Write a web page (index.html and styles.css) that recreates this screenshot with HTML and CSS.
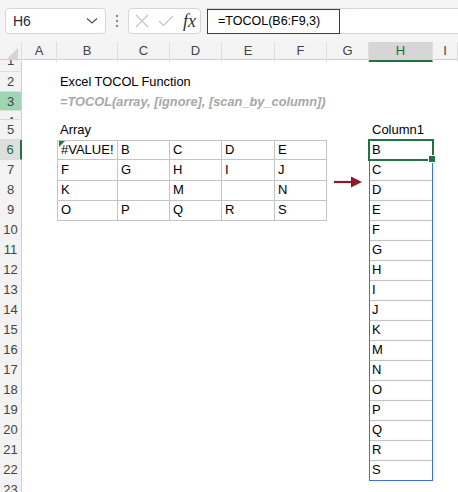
FILE: index.html
```html
<!DOCTYPE html>
<html lang="en">
<head>
    <meta charset="UTF-8">
    <title>Excel TOCOL Function</title>
    <link rel="stylesheet" href="styles.css">
</head>
<body>
    <!-- formula bar -->
    <div class="topbar">
        <div class="namebox">
            <span>H6</span>
            <svg width="12" height="8" viewBox="0 0 12 8"><path d="M1 1.5 L6 6 L11 1.5" fill="none" stroke="#555" stroke-width="1.3"/></svg>
        </div>
        <div class="grip">
            <svg width="4" height="14" viewBox="0 0 4 14"><circle cx="2" cy="2" r="1.2" fill="#8a8a8a"/><circle cx="2" cy="7" r="1.2" fill="#8a8a8a"/><circle cx="2" cy="12" r="1.2" fill="#8a8a8a"/></svg>
        </div>
        <div class="fxbtns">
            <svg width="14" height="14" viewBox="0 0 14 14"><path d="M1 1 L13 13 M13 1 L1 13" stroke="#c4c4c4" stroke-width="1.2"/></svg>
            <svg width="16" height="12" viewBox="0 0 16 12"><path d="M1 6 L5.5 10.5 L15 1" fill="none" stroke="#c4c4c4" stroke-width="1.2"/></svg>
            <span class="fx">fx</span>
        </div>
        <div class="formula">
            <div class="formula-text">=TOCOL(B6:F9,3)</div>
        </div>
    </div>

    <div class="sheet">
        <div class="row colhdr">
            <div class="corner"></div>
            <div>A</div><div>B</div><div>C</div><div>D</div><div>E</div><div>F</div><div>G</div>
            <div class="active">H</div><div>I</div>
        </div>

        <div class="row r1"><div class="rh">1</div></div>
        <div class="row"><div class="rh">2</div><div></div><div class="cell title">Excel TOCOL Function</div></div>
        <div class="row r3"><div class="rh hl-green">3</div><div></div><div class="cell syntax">=TOCOL(array, [ignore], [scan_by_column])</div></div>
        <div class="row r4"><div class="rh">4</div></div>
        <div class="row"><div class="rh">5</div><div></div><div class="cell">Array</div><div></div><div></div><div></div><div></div><div></div><div class="cell">Column1</div></div>

        <div class="row">
            <div class="rh sel-row">6</div><div></div>
            <div class="cell tc first top err">#VALUE!</div>
            <div class="cell tc top">B</div>
            <div class="cell tc top">C</div>
            <div class="cell tc top">D</div>
            <div class="cell tc top">E</div>
            <div></div>
            <div class="cell selected">B</div>
        </div>
        <div class="row">
            <div class="rh">7</div><div></div>
            <div class="cell tc first">F</div>
            <div class="cell tc">G</div>
            <div class="cell tc">H</div>
            <div class="cell tc">I</div>
            <div class="cell tc">J</div>
            <div class="arrow-cell">
                <svg class="arrow" width="28" height="12" viewBox="0 0 28 12"><path d="M0 6 H19" stroke="#8b1a2b" stroke-width="2.2"/><path d="M17 0.5 L28 6 L17 11.5 Z" fill="#8b1a2b"/></svg>
            </div>
            <div class="cell spill">C</div>
        </div>
        <div class="row">
            <div class="rh">8</div><div></div>
            <div class="cell tc first">K</div>
            <div class="cell tc"></div>
            <div class="cell tc">M</div>
            <div class="cell tc"></div>
            <div class="cell tc">N</div>
            <div></div>
            <div class="cell spill">D</div>
        </div>
        <div class="row">
            <div class="rh">9</div><div></div>
            <div class="cell tc first">O</div>
            <div class="cell tc">P</div>
            <div class="cell tc">Q</div>
            <div class="cell tc">R</div>
            <div class="cell tc">S</div>
            <div></div>
            <div class="cell spill">E</div>
        </div>
        <div class="row"><div class="rh">10</div><div></div><div></div><div></div><div></div><div></div><div></div><div></div><div class="cell spill">F</div></div>
        <div class="row"><div class="rh">11</div><div></div><div></div><div></div><div></div><div></div><div></div><div></div><div class="cell spill">G</div></div>
        <div class="row"><div class="rh">12</div><div></div><div></div><div></div><div></div><div></div><div></div><div></div><div class="cell spill">H</div></div>
        <div class="row"><div class="rh">13</div><div></div><div></div><div></div><div></div><div></div><div></div><div></div><div class="cell spill">I</div></div>
        <div class="row"><div class="rh">14</div><div></div><div></div><div></div><div></div><div></div><div></div><div></div><div class="cell spill">J</div></div>
        <div class="row"><div class="rh">15</div><div></div><div></div><div></div><div></div><div></div><div></div><div></div><div class="cell spill">K</div></div>
        <div class="row"><div class="rh">16</div><div></div><div></div><div></div><div></div><div></div><div></div><div></div><div class="cell spill">M</div></div>
        <div class="row"><div class="rh">17</div><div></div><div></div><div></div><div></div><div></div><div></div><div></div><div class="cell spill">N</div></div>
        <div class="row"><div class="rh">18</div><div></div><div></div><div></div><div></div><div></div><div></div><div></div><div class="cell spill">O</div></div>
        <div class="row"><div class="rh">19</div><div></div><div></div><div></div><div></div><div></div><div></div><div></div><div class="cell spill">P</div></div>
        <div class="row"><div class="rh">20</div><div></div><div></div><div></div><div></div><div></div><div></div><div></div><div class="cell spill">Q</div></div>
        <div class="row"><div class="rh">21</div><div></div><div></div><div></div><div></div><div></div><div></div><div></div><div class="cell spill">R</div></div>
        <div class="row"><div class="rh">22</div><div></div><div></div><div></div><div></div><div></div><div></div><div></div><div class="cell spill last">S</div></div>
        <div class="row"><div class="rh">23</div></div>
    </div>
</body>
</html>
```

FILE: styles.css
```css
* {
    margin: 0;
    padding: 0;
    box-sizing: border-box;
}

body {
    width: 458px;
    height: 492px;
    overflow: hidden;
    background: #ffffff;
    font-family: 'Liberation Sans', Arial, sans-serif;
    font-size: 13px;
    color: #000;
}

/* ---------- formula bar ---------- */
.topbar {
    height: 42px;
    background: #f5f5f5;
    display: flex;
    align-items: flex-start;
    padding-top: 8px;
    padding-left: 5px;
}

.namebox {
    width: 101px;
    height: 26px;
    background: #fff;
    border: 1px solid #d6d6d6;
    border-radius: 4px;
    display: flex;
    align-items: center;
    justify-content: space-between;
    padding: 0 7px 0 7px;
    font-size: 14px;
    color: #1f2a44;
}

.grip {
    width: 22px;
    height: 26px;
    display: flex;
    align-items: center;
    justify-content: center;
}

.fxbtns {
    width: 73px;
    height: 26px;
    background: #fff;
    border: 1px solid #d6d6d6;
    border-radius: 4px;
    display: flex;
    align-items: center;
    gap: 9px;
    padding-left: 6px;
}

.fx {
    font-family: 'Liberation Serif', 'DejaVu Serif', serif;
    font-style: italic;
    font-size: 18px;
    color: #333;
    margin-left: 0;
}

.formula {
    flex: 1;
    height: 26px;
    margin-left: 6px;
    background: #fff;
    border-top: 1px solid #d6d6d6;
    border-bottom: 1px solid #d6d6d6;
    display: flex;
}

.formula-text {
    width: 133px;
    height: 25px;
    border: 1.5px solid #8b1a2b;
    padding-left: 10px;
    line-height: 22px;
    font-size: 12.5px;
    color: #000;
}

/* ---------- sheet grid ---------- */
.row {
    display: grid;
    grid-template-columns: 22px 35px 61px 52px 52px 53px 52px 42px 64px 1fr;
    height: 20px;
    line-height: 20px;
}

.r1 { height: 12px; }
.r3 { height: 19px; line-height: 19px; }
.r4 { height: 9px; }

.colhdr {
    height: 18px;
    line-height: 18px;
    background: #f3f3f3;
    border-bottom: 1px solid #cfcfcf;
    color: #444;
    text-align: center;
    font-size: 13px;
}

.colhdr > div {
    border-right: 1px solid #dedede;
}

.colhdr .active {
    background: #d6d6d6;
    color: #1d6b3f;
    border-bottom: 2px solid #217346;
}

.corner {
    position: relative;
}

.corner::after {
    content: '';
    position: absolute;
    right: 3px;
    bottom: 3px;
    border-left: 11px solid transparent;
    border-bottom: 11px solid #d4d4d4;
}

.rh {
    background: #f3f3f3;
    border-right: 1px solid #cfcfcf;
    border-bottom: 1px solid #dcdcdc;
    text-align: center;
    color: #444;
    font-size: 13px;
    overflow: hidden;
}

.r1 .rh { line-height: 2px; }
.r4 .rh { line-height: 22px; }

.rh.hl-green {
    background: #9fd5b5;
}

.rh.sel-row {
    background: #dedede;
    color: #1d6b3f;
    border-right: 2px solid #217346;
}

.cell {
    padding-left: 3px;
    white-space: nowrap;
}

.title {
    font-size: 12.8px;
}

.syntax {
    font-weight: bold;
    font-style: italic;
    color: #a8a8a8;
    font-size: 12.8px;
}

/* source table B6:F9 */
.tc {
    border-right: 1px solid #c4c4c4;
    border-bottom: 1px solid #c4c4c4;
}

.tc.first { border-left: 1px solid #c4c4c4; }
.tc.top { border-top: 1px solid #c4c4c4; line-height: 18px; }

.err {
    position: relative;
}

.err::before {
    content: '';
    position: absolute;
    left: 1px;
    top: 0;
    border-top: 6px solid #1f7a3c;
    border-right: 6px solid transparent;
}

/* result column */
.selected {
    position: relative;
}

.selected::after {
    content: '';
    position: absolute;
    inset: -1px -1px -1px -1px;
    border: 2px solid #217346;
}

.selected::before {
    content: '';
    position: absolute;
    right: -3px;
    bottom: -3px;
    width: 6px;
    height: 6px;
    background: #217346;
    border: 1px solid #fff;
    z-index: 2;
}

.spill {
    border-left: 1px solid #3d72d2;
    border-right: 1px solid #3d72d2;
    border-bottom: 1px solid #c4c4c4;
    padding-left: 2px;
    box-shadow: 2px 0 3px rgba(0, 0, 0, 0.06);
}

.spill.last {
    border-bottom: 1px solid #3d72d2;
}

.arrow-cell {
    position: relative;
}

.arrow {
    position: absolute;
    left: 7px;
    top: 16px;
}
```
